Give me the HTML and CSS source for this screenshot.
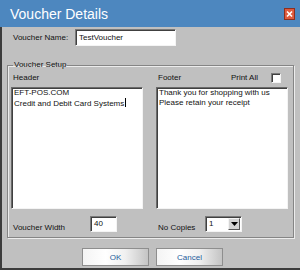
FILE: index.html
```html
<!DOCTYPE html>
<html lang="en">
<head>
  <meta charset="UTF-8">
  <title>Voucher Details</title>
  <link rel="stylesheet" href="styles.css">
</head>
<body>

<div class="window">
  <div class="titlebar">
    <span class="title">Voucher Details</span>
    <svg class="close" width="11" height="12" viewBox="0 0 11 12">
      <rect x="0.5" y="0.5" width="10" height="11" fill="#dd5a3e" stroke="#8c2f1f"/>
      <path d="M3 3.5 L8 8.5 M8 3.5 L3 8.5" stroke="#fff" stroke-width="1.6"/>
    </svg>
  </div>

  <div class="frame">
    <div class="name-row">
      <label>Voucher Name:</label>
      <div class="field name-field">TestVoucher</div>
    </div>

    <fieldset class="setup">
      <legend>Voucher Setup</legend>

      <div class="columns">
        <div class="col">
          <div class="col-head">
            <span>Header</span>
          </div>
          <div class="memo">EFT-POS.COM<br>Credit and Debit Card Systems<span class="caret"></span></div>
          <div class="col-foot">
            <span class="foot-label">Voucher Width</span>
            <div class="field width-field">40</div>
          </div>
        </div>

        <div class="col">
          <div class="col-head">
            <span>Footer</span>
            <span class="print-all">Print All</span>
            <span class="check"></span>
          </div>
          <div class="memo">Thank you for shopping with us<br>Please retain your receipt</div>
          <div class="col-foot">
            <span class="foot-label copies-label">No Copies</span>
            <div class="field combo">
              <span class="combo-value">1</span>
              <span class="combo-btn">
                <svg width="7" height="4" viewBox="0 0 7 4"><path d="M0 0 H7 L3.5 4 Z" fill="#000"/></svg>
              </span>
            </div>
          </div>
        </div>
      </div>
    </fieldset>

    <div class="buttons">
      <button class="btn">OK</button>
      <button class="btn">Cancel</button>
    </div>
  </div>
</div>

</body>
</html>
```

FILE: styles.css
```css
body {
  margin: 0;
  font-family: "Liberation Sans", Arial, sans-serif;
  font-size: 8px;
  line-height: 10px;
  color: #111;
}
.window {
  width: 300px;
  height: 270px;
  display: flex;
  flex-direction: column;
  background: #c0c0c0;
}
.titlebar {
  height: 27px;
  background: #4d87bf;
  display: flex;
  align-items: center;
  justify-content: space-between;
  padding: 0 5px 0 10px;
  box-sizing: border-box;
  flex-shrink: 0;
}
.title {
  color: #fff;
  font-size: 14px;
  line-height: 16px;
}
.close {
  display: block;
  margin-top: 1px;
}
.frame {
  flex: 1;
  border-left: 2px solid #3c3c3c;
  border-bottom: 2px solid #3c3c3c;
  display: flex;
  flex-direction: column;
}
.field {
  background: #fff;
  border: 1px solid;
  border-color: #7a7a7a #f4f4f4 #f4f4f4 #7a7a7a;
  box-shadow: inset 1px 1px #404040;
  box-sizing: border-box;
  padding: 0 3px;
  display: flex;
  align-items: center;
}
.name-row {
  display: flex;
  align-items: center;
  margin-top: 2px;
  padding-left: 11px;
}
.name-row label {
  width: 62px;
}
.name-field {
  width: 101px;
  height: 17px;
}
.setup {
  margin: 14px 6px 0 5px;
  padding: 3px 4px 5px 3px;
  border: 1px solid #858585;
  box-shadow: inset 1px 1px #ececec, 1px 1px #ececec;
  min-width: 0;
}
.setup legend {
  padding: 0 1px;
  margin-left: 2px;
}
.columns {
  display: grid;
  grid-template-columns: 132px 132px;
  column-gap: 13px;
}
.col-head {
  height: 10px;
  display: flex;
  align-items: center;
  padding-left: 2px;
}
.print-all {
  margin-left: auto;
  margin-right: 13px;
}
.check {
  width: 10px;
  height: 10px;
  box-sizing: border-box;
  background: #fff;
  border: 1px solid;
  border-color: #7a7a7a #f4f4f4 #f4f4f4 #7a7a7a;
  box-shadow: inset 1px 1px #404040;
  margin-right: 7px;
}
.memo {
  margin-top: 4px;
  height: 122px;
  box-sizing: border-box;
  background: #fff;
  border: 1px solid;
  border-color: #6a6a6a #f4f4f4 #f4f4f4 #6a6a6a;
  box-shadow: inset 1px 1px #404040;
  padding: 0 2px;
}
.caret {
  display: inline-block;
  width: 1px;
  height: 9px;
  background: #000;
  vertical-align: -1px;
  margin-left: 1px;
}
.col-foot {
  margin-top: 7px;
  display: flex;
  align-items: flex-end;
  padding-left: 2px;
}
.foot-label {
  width: 77px;
  margin-bottom: -1px;
}
.copies-label {
  width: 47px;
}
.width-field {
  width: 27px;
  height: 16px;
}
.combo {
  width: 37px;
  height: 16px;
  padding: 0 1px 0 3px;
  justify-content: space-between;
}
.combo-btn {
  width: 12px;
  height: 12px;
  background: #d4d4d4;
  border: 1px solid;
  border-color: #f4f4f4 #555 #555 #f4f4f4;
  box-sizing: border-box;
  display: flex;
  align-items: center;
  justify-content: center;
}
.combo-btn svg {
  display: block;
}
.buttons {
  display: flex;
  gap: 7px;
  padding-left: 80px;
  margin-top: 10px;
}
.btn {
  width: 67px;
  height: 18px;
  font-family: "Liberation Sans", Arial, sans-serif;
  font-size: 8px;
  color: #1d5d9c;
  background: linear-gradient(to right, #f4f4f4 0%, #ffffff 35%, #f0f0f0 65%, #c4c4c4 100%);
  border: 1px solid #8e8e8e;
  padding: 0;
}
```
